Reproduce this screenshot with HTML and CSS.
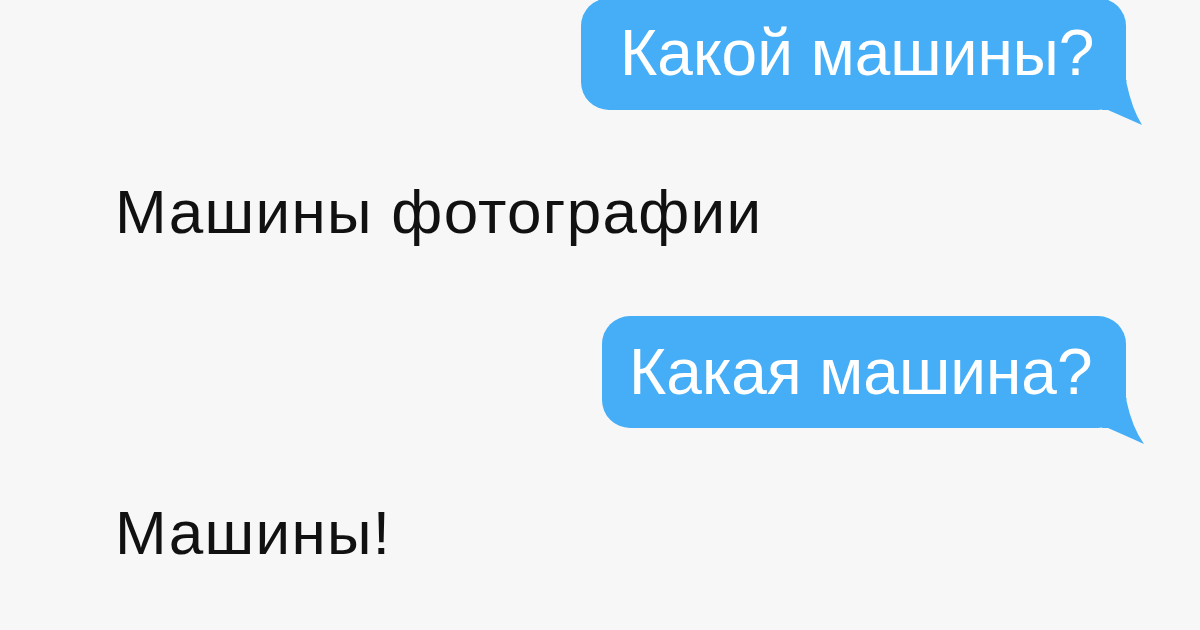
FILE: index.html
```html
<!DOCTYPE html>
<html lang="ru">
<head>
<meta charset="utf-8">
<title>Машины</title>
<link rel="stylesheet" href="styles.css">
</head>
<body>
<main class="chat">
  <div class="bubble bubble--first">
    <span class="bubble__text">Какой машины?</span>
    <svg class="bubble__tail" width="44" height="55" viewBox="0 0 44 55"><path d="M0 35 L6 35 Q22 42 40 50 Q30 34 24.5 8 L24.5 5 L0 5 Z" fill="#45aef7"/></svg>
  </div>
  <p class="reply reply--first">Машины фотографии</p>
  <div class="bubble bubble--second">
    <span class="bubble__text">Какая машина?</span>
    <svg class="bubble__tail" width="44" height="55" viewBox="0 0 44 55"><path d="M0 35 L6 35 Q22 42 42 51 Q30 34 24.5 8 L24.5 5 L0 5 Z" fill="#45aef7"/></svg>
  </div>
  <p class="reply reply--second">Машины!</p>
</main>
</body>
</html>
```
FILE: styles.css
```css
html, body {
  margin: 0;
  padding: 0;
}
body {
  background: #f7f7f7;
  font-family: "Liberation Sans", Arial, sans-serif;
  width: 1200px;
  height: 630px;
  overflow: hidden;
}
.chat {
  display: flex;
  flex-direction: column;
  align-items: flex-start;
}
.bubble {
  position: relative;
  align-self: flex-end;
  margin-right: 74px;
  background: #45aef7;
  color: #ffffff;
  border-radius: 28px;
  height: 112px;
  box-sizing: border-box;
  font-size: 64px;
  line-height: 112px;
  white-space: nowrap;
}
.bubble__text {
  position: relative;
  z-index: 1;
}
.bubble--first {
  margin-top: -2px;
  width: 545px;
  padding-left: 39px;
}
.bubble--first .bubble__text {
  top: -1px;
}
.bubble--second {
  margin-top: 73px;
  width: 524px;
  padding-left: 27px;
}
.bubble__tail {
  position: absolute;
  left: calc(100% - 24px);
  top: calc(100% - 35px);
}
.reply {
  margin: 0;
  padding-left: 115px;
  color: #111111;
  font-size: 62px;
  line-height: 62px;
  letter-spacing: 1.3px;
  white-space: nowrap;
}
.reply--first {
  margin-top: 71px;
}
.reply--second {
  margin-top: 74px;
}
```
